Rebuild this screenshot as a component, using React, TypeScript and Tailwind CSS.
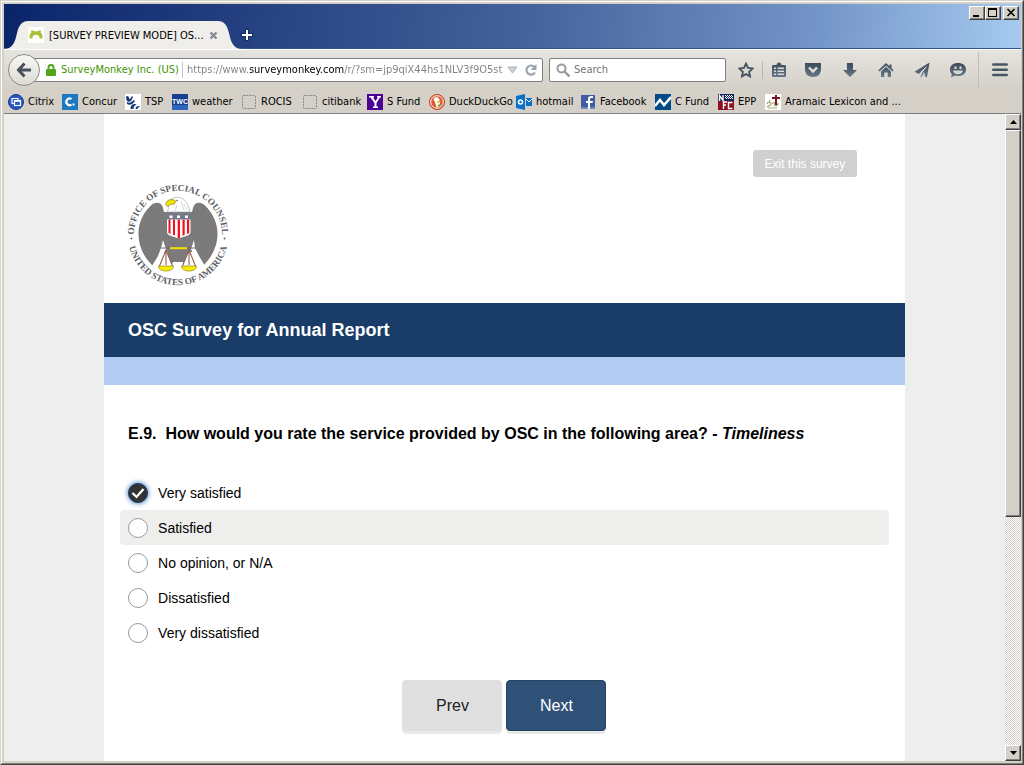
import { useState } from 'react';
import type { ReactNode } from 'react';

const ARC_TOP = 'M 9.100 67 A 44 44 0 1 1 90.900 67';
const ARC_BOTTOM = 'M 0.200 43 A 50.400 50.400 0 1 0 99.800 43';

const speckles = Array.from({ length: 110 }, (_, i) => ({
  x: (i * 37) % 41,
  y: (i * 23 + ((i * i) % 7)) % 37,
  fill: ['#94608f', '#6d6f9c', '#8f7f86', '#7d5f92'][i % 4],
}));

function Seal() {
  return (
    <svg viewBox="-2 -1 104 104" className="-ml-0.5 size-[104px]" role="img" aria-label="Office of Special Counsel seal">
      <defs>
        <path id="arc-top" d={ARC_TOP} />
        <path id="arc-bottom" d={ARC_BOTTOM} />
        <pattern id="feathers" width="41" height="37" patternUnits="userSpaceOnUse">
          <rect width="41" height="37" fill="#7b7b7b" />
          {speckles.map((dot, i) => <rect key={i} x={dot.x} y={dot.y} width="1" height="1" fill={dot.fill} opacity="0.6" />)}
        </pattern>
      </defs>
      <path d="M35 24C34 18 27 17 22.500 22 14 30 10 41 10.500 51c.3 11 5 22 14 30.500L28 76l8-8h4v10l10 4 10-4V68h4l8 8 3.500 5.500C84 73 89.300 62 89.500 51c.3-11-4-21-12-29-5-5-11-4-12.500 2l-1 4H36Z" fill="url(#feathers)" />
      <path d="M45 78h10l3 8H42z" fill="#fff" />
      <path d="M39 28c1-2 2-4 1-7l1-4c4-5 13-5 16 0 3 3 4 7 5 11Z" fill="#fff" stroke="#93a0a4" strokeWidth=".6" />
      <path d="M53 17l3 9M49 21l-2 6M56 20l3 6" stroke="#b9c3c6" strokeWidth=".6" />
      <path d="M38.500 18c2-3 7-3 9-1l-1 3-4 .5-3 2c-2-1-2-3-1-4.500Z" fill="#f3e500" stroke="#766b1c" strokeWidth=".6" />
      <circle cx="49" cy="16.500" r=".8" fill="#555" />
      <path d="M39 30h23.500v18c0 4-6 4-11.700 6.500C45 52 39 52 39 48Z" fill="#fff" />
      <path d="M40.500 35.500h2V50l-2-1zM45 35.500h2v16l-2-.7zM49.700 35.500h2.300V54l-1.200.5-1.100-.5zM54.500 35.500h2.200V51l-2.200.8zM59 35.500h2.200V49l-2.200 1z" fill="#f60f1b" />
      <path d="M38 29.500h25v6H38z" fill="#767a88" />
      <path d="M41.500 31.500h3v2.500h-3zM49 31.500h3v2.500h-3zM57 31.500h3v2.500h-3z" fill="#fff" />
      <path d="M35 56l3 9-5 12-5 6-4-1 6-10 3-8zM66 56l-3 9 5 12 5 6 4-1-6-10-4-8z" fill="#fff" />
      <path d="M33 64h9M59 64h9" stroke="#6f6470" strokeWidth="1.200" />
      <path d="M42 64.200h17" stroke="#f3e000" strokeWidth="2" />
      <path d="M38 66l-6.500 16h13zM61 66l-6.500 16h13z" fill="#fff" />
      <path d="M38 66l-6.500 16M38 66l6.500 16M38 67v14M61 66l-6.500 16M61 66l6.500 16M61 67v14" stroke="#94624a" strokeWidth="1.100" />
      <path d="M30.500 82h15c0 3-3 5-7.500 5s-7.500-2-7.500-5ZM53.500 82h15c0 3-3 5-7.500 5s-7.500-2-7.500-5Z" fill="#f5ec00" stroke="#9b8528" strokeWidth=".7" />
      <g fill="#5d6064" fontFamily='"Liberation Serif", serif' fontSize="9.200" fontWeight="700">
        <text textAnchor="middle"><textPath href="#arc-top" startOffset="50%">OFFICE OF SPECIAL COUNSEL</textPath></text>
        <text textAnchor="middle"><textPath href="#arc-bottom" startOffset="50%">UNITED STATES OF AMERICA</textPath></text>
      </g>
      <circle cx="3.500" cy="54.500" r="0.900" fill="#5d6064" />
      <circle cx="96.500" cy="54.500" r="0.900" fill="#5d6064" />
    </svg>
  );
}

function Glyph({ children, label, box = 'w-[36px]' }: { children: ReactNode; label: string; box?: string }) {
  return (
    <button type="button" aria-label={label} className={`flex h-6 shrink-0 items-center justify-center ${box}`}>
      <svg viewBox="0 0 16 16" className="size-4" fill="url(#steel)">{children}</svg>
    </button>
  );
}

const bookmarks: { name: string; width: string; icon: ReactNode }[] = [
  { name: 'Citrix', width: 'w-[54px]', icon: <><circle cx="8" cy="8" r="7.500" fill="#2c56c4" stroke="#173a8f" /><path d="M4 4.500h6v5H4z" fill="none" stroke="#fff" strokeWidth="1.200" /><path d="M6.500 6.500h6v5h-6z" fill="#2c56c4" stroke="#fff" strokeWidth="1.200" /><path d="M6 6h7v1.800H6z" fill="#fff" /></> },
  { name: 'Concur', width: 'w-[63px]', icon: <><path d="M0 0h16v16H0z" fill="#1c78c0" /><path d="M9.500 5.200A3.300 3.300 0 1 0 9.500 10.600" fill="none" stroke="#fff" strokeWidth="2.200" /><path d="M10.500 9.500h2v2h-2z" fill="#fff" /></> },
  { name: 'TSP', width: 'w-[47px]', icon: <><path d="M0 0h16v16H0z" fill="#fff" /><path d="M1 3c1-2 3-1 3 1 0 1 2 1 2 3-3 2-5 0-5-4M5 5l2-3 1 1-2 4M2 8c4 2 5-1 7-2l1 1c-2 3-5 5-8 3M5.500 15c0-4 2-5 5-5l1 1c-2 0-3 2-3 4zM10.500 15c0-2 1-3 4-3v1c-1 0-2 1-2 2z" fill="#18377f" /></> },
  { name: 'weather', width: 'w-[69px]', icon: <><path d="M0 0h16v16H0z" fill="#163f91" /><path d="M0 11h16v5H0z" fill="#2b67bd" /><text x="8" y="10" textAnchor="middle" fontFamily="Liberation Sans, sans-serif" fontWeight="700" fontSize="7" fill="#fff">TWC</text></> },
  { name: 'ROCIS', width: 'w-[61px]', icon: <rect x="1.500" y="1.500" width="13" height="13" rx="1" fill="none" stroke="#858585" strokeDasharray="2 1" /> },
  { name: 'citibank', width: 'w-[65px]', icon: <rect x="1.500" y="1.500" width="13" height="13" rx="1" fill="none" stroke="#858585" strokeDasharray="2 1" /> },
  { name: 'S Fund', width: 'w-[62px]', icon: <><path d="M0 0h16v16H0z" fill="#4b0098" /><path d="M2 2h5v1.500H6L8.500 7 11 3.500h-1V2h4v1.500h-1L9.500 9v3.500H11V14H6v-1.500h1.500V9L3.500 3.500H2z" fill="#fff" /></> },
  { name: 'DuckDuckGo', width: 'w-[87px]', icon: <><circle cx="8" cy="8" r="7.500" fill="#de5833" stroke="#c83d18" /><circle cx="8" cy="8" r="6.300" fill="none" stroke="#fff" /><path d="M5 4c3-2 6 0 5.500 3l1 5-4 1.500L6 8C5 7 4 5 5 4Z" fill="#fff" /><path d="M7.500 7.500l4-1v1.500l-3 1z" fill="#f4b900" /><path d="M8.500 11l3-1v2.500H9z" fill="#66a83a" /></> },
  { name: 'hotmail', width: 'w-[64px]', icon: <><path d="M0 2l9-2v16l-9-2z" fill="#0872c6" /><circle cx="4.500" cy="8" r="2" fill="none" stroke="#fff" strokeWidth="1.500" /><path d="M10 4h6v8h-6z" fill="#0872c6" /><path d="M10 5l3 3 3-3" fill="none" stroke="#fff" /></> },
  { name: 'Facebook', width: 'w-[75px]', icon: <><path d="M1 1h14v14H1z" fill="#405da6" /><path d="M1 13h14v2H1z" fill="#7288c0" /><path d="M8 15V9H6V7h2V5c0-2 1-3 3-3h2v2h-1.500C10.500 4 10 4.500 10 5.500V7h3l-.5 2H10v6z" fill="#fff" /></> },
  { name: 'C Fund', width: 'w-[63px]', icon: <><path d="M0 0h16v16H0z" fill="#004b86" /><path d="M0 12l5-6 4 5 7-8" fill="none" stroke="#fff" strokeWidth="2.500" /></> },
  { name: 'EPP', width: 'w-[47px]', icon: <><path d="M0 0h16v16H0z" fill="#10205f" /><path d="M0 7h16v9H0z" fill="#8d1020" /><path d="M7 1h1v1H7zm2 0h1v1H9zm2 0h1v1h-1zm2 0h1v1h-1zM8 2h1v1H8zm2 0h1v1h-1zm2 0h1v1h-1zm2 0h1v1h-1zM7 3h1v1H7zm2 0h1v1H9zm2 0h1v1h-1zm2 0h1v1h-1zM8 4h1v1H8zm2 0h1v1h-1zm2 0h1v1h-1zm2 0h1v1h-1z" fill="#fff" /><path d="M1.500 7V1.500L5 6.500V1M5.500 15V8H9M5.500 11H8M14.500 8.500h-4v6h4" fill="none" stroke="#fff" strokeWidth="1.400" /></> },
  { name: 'Aramaic Lexicon and ...', width: 'w-[140px]', icon: <><path d="M0 0h16v16H0z" fill="#fff" /><path d="M2 10c1-3 4-2 4 0s-3 2-4 3M7 10c2-3 4 0 2 2M10 12c2 0 3-1 3-3M3 14h9M5 6l-1 3" fill="none" stroke="#a7ac76" strokeWidth="1.200" /><path d="M10 1h2v2h3v2h-3v6h-2V5H7V3h3z" fill="#7b1220" /></> },
];

const bevel = 'border border-t-white border-l-white border-r-[#404040] border-b-[#404040] bg-[#d4d0c8] shadow-[inset_-1px_-1px_0_#808080]';

function TitleBar() {
  return (
    <header className="flex h-[45px] shrink-0 justify-between border-b border-[#31568d] bg-[linear-gradient(96deg,#0a246a,#426099_50%,#7495c8_80%,#a6caf0)]">
      <div className="flex items-end">
        <svg viewBox="0 0 24 28" className="-mb-px h-7 w-6"><path d="M0 28C8 28 11 22 13 12 15 4 18 0 24 0V28Z" fill="#efeeea" /></svg>
        <div className="-mb-px flex h-7 w-[190px] items-center bg-[#efeeea]">
          <svg viewBox="0 0 16 16" className="size-4 shrink-0">
            <path d="M0 0h16v16H0z" fill="#fff" />
            <path d="M1.500 11.500C1 8 2 6.500 3.500 5.500L2.800 4c1.500-1 3-.5 3.400.5 1.200-.4 2.400-.4 3.600 0 .4-1 1.900-1.500 3.400-.5l-.7 1.500c1.500 1 2.500 2.500 2 6h-2.800c0-2.500-1.200-3.800-3.700-3.800s-3.700 1.300-3.700 3.800Z" fill="#a9bf38" />
          </svg>
          <span className="ml-[5px] w-[160px] shrink-0 pt-0.5 whitespace-nowrap">[SURVEY PREVIEW MODE] OS...</span>
          <button type="button" aria-label="Close tab" className="shrink-0">
            <svg viewBox="0 0 9 9" className="size-[9px]"><path d="M1.500 1.500l6 6M7.500 1.500l-6 6" stroke="#858b92" strokeWidth="2.400" /></svg>
          </button>
        </div>
        <svg viewBox="0 0 24 28" className="-mb-px h-7 w-6"><path d="M24 28C16 28 13 22 11 12 9 4 6 0 0 0V28Z" fill="#efeeea" /></svg>
        <button type="button" aria-label="New tab" className="mb-1.5 -ml-0.5">
          <svg viewBox="0 0 14 14" className="size-[14px]"><path d="M7 1v12M1 7h12" stroke="#172d64" strokeWidth="4" /><path d="M7 2v10M2 7h10" stroke="#fff" strokeWidth="2" /></svg>
        </button>
      </div>
      <div className="flex pt-0.5 pr-0.5">
        <button type="button" aria-label="Minimize" className={`h-[14px] w-4 ${bevel}`}><svg viewBox="0 0 14 12" className="h-3 w-[14px]"><path d="M3 8h6v2H3z" /></svg></button>
        <button type="button" aria-label="Maximize" className={`h-[14px] w-4 ${bevel}`}><svg viewBox="0 0 14 12" className="h-3 w-[14px]"><path d="M2 1h9v9H2zM3 3v6h7V3z" fillRule="evenodd" /></svg></button>
        <button type="button" aria-label="Close" className={`ml-0.5 h-[14px] w-4 ${bevel}`}><svg viewBox="0 0 14 12" className="h-3 w-[14px]"><path d="M3.500 2l7 7M10.500 2l-7 7" stroke="#000" strokeWidth="1.600" /></svg></button>
      </div>
    </header>
  );
}

function NavBar() {
  return (
    <nav aria-label="Navigation" className="flex h-10 shrink-0 items-center border-t border-white bg-linear-to-b from-[#e6e4df] to-[#d4d0c8] pl-1">
      <svg className="absolute size-0" aria-hidden="true">
        <defs><linearGradient id="steel" x1="0" y1="0" x2="0" y2="1"><stop stopColor="#3c4a58" /><stop offset="1" stopColor="#66788a" /></linearGradient></defs>
      </svg>
      <button type="button" aria-label="Back" className="z-10 flex size-8 shrink-0 items-center justify-center rounded-full border border-[#8b8b88] bg-linear-to-b from-[#f8f8f6] to-[#dddad4]">
        <svg viewBox="0 0 16 16" className="size-4"><path d="M8.500 1.500L2.500 8l6 6.500M3 8h12" fill="none" stroke="#46515b" strokeWidth="3" /></svg>
      </button>
      <div className="-ml-2 flex h-6 min-w-0 flex-1 items-center rounded-xs border border-[#808080] bg-white pr-1 pl-[13px]">
        <svg viewBox="0 0 10 12" className="h-3 w-[10px] shrink-0"><path d="M2.500 6V3.500a2.500 2.500 0 0 1 5 0V6" fill="none" stroke="#51a51a" strokeWidth="1.800" /><rect y="5" width="10" height="7" rx="1" fill="#51a51a" /></svg>
        <span className="ml-[5px] w-[121px] shrink-0 whitespace-nowrap text-[#3f9500]">SurveyMonkey Inc. (US)</span>
        <span className="h-4 w-px shrink-0 bg-[#c6c6be]" />
        <input
          type="text"
          aria-label="Address"
          defaultValue="https://www.surveymonkey.com/r/?sm=jp9qiX44hs1NLV3f9O5sth"
          className="ml-1 h-5 min-w-0 flex-1 bg-[linear-gradient(90deg,#808080_63px,#000_63px,#000_157px,#808080_157px)] bg-clip-text text-transparent outline-none"
        />
        <svg viewBox="0 0 11 8" className="mr-[6px] ml-1 h-2 w-[11px] shrink-0"><path d="M1 1h9L5.500 7z" fill="#ced3d8" stroke="#a9b0b7" /></svg>
        <button type="button" aria-label="Reload" className="shrink-0">
          <svg viewBox="0 0 14 14" className="size-[14px]"><path d="M11 9.500A4.600 4.600 0 1 1 10.500 4" fill="none" stroke="#9ba5b0" strokeWidth="2.200" /><path d="M12.500 1v6h-6z" fill="#9ba5b0" /></svg>
        </button>
      </div>
      <label className="mr-1 ml-[6px] flex h-6 w-[177px] shrink-0 items-center rounded-xs border border-[#808080] bg-white pl-[6px]">
        <svg viewBox="0 0 14 14" className="size-[14px] shrink-0"><circle cx="5.500" cy="5.500" r="4" fill="none" stroke="#999" strokeWidth="2" /><path d="M8.500 8.500l5 5" stroke="#999" strokeWidth="2.400" /></svg>
        <input type="text" placeholder="Search" aria-label="Search" className="ml-1 h-5 min-w-0 flex-1 outline-none placeholder:text-[#757575]" />
      </label>
      <Glyph label="Bookmark" box="w-[32px]"><path d="M8 1.700l2 4.300 4.500.600-3.300 3.200.8 4.600L8 12.200l-4 2.200.8-4.600L1.500 6.600 6 6z" fill="none" stroke="#46545f" strokeWidth="1.900" /></Glyph>
      <span className="h-[18px] w-px shrink-0 bg-[#b8b5af]" />
      <Glyph label="Bookmarks list" box="w-[31px]"><path d="M1 4.500C1 3 2 3 3 3h2.500c.5-3.500 4.500-3.500 5 0H13c1 0 2 0 2 1.500V14c0 1-1 1-1 1H2c-1 0-1-1-1-1zM3 5.500V7h2V5.500zm3.500 0V7H13V5.500zM3 8.500V10h2V8.500zm3.500 0V10H13V8.500zM3 11.500V13h2v-1.500zm3.500 0V13H13v-1.500z" fillRule="evenodd" /></Glyph>
      <Glyph label="Pocket" box="w-[38px]"><path d="M0 1h16v6c0 5-3 8-8 8s-8-3-8-8z" /><path d="M4 5.500l4 4 4-4" fill="none" stroke="#e2e0db" strokeWidth="2.400" /></Glyph>
      <Glyph label="Downloads"><path d="M5 1h6v7h4l-7 7-7-7h4z" /></Glyph>
      <Glyph label="Home"><path d="M8 1L.3 8.200l1.200 1.200L8 3.500l6.500 5.900 1.200-1.200-2.200-2V2.500h-2v1.800zM3 9.500l5-4.700 5 4.700V15H9.700v-4.500H6.300V15H3z" /></Glyph>
      <Glyph label="Share"><path d="M15.500.5L.5 9.700 4.800 12 13 4 6.500 13v2.800l2-2.300 1.500-4 1 5 2 .8z" /><path d="M12.500 4.500L8 9.500l-1.500 5" fill="none" stroke="#e2e0db" strokeWidth=".9" /></Glyph>
      <Glyph label="Chat"><path d="M8 1c4.800 0 8 2.600 8 6.400S12.800 14 8 14c-1 0-2-.1-3-.5L1 15.500l.8-3.500C.6 11 0 9.500 0 7.500 0 3.600 3.200 1 8 1M4.500 4.500V7h2V4.500zm5 0V7h2V4.500zM3 8.500c.5 2.500 2.500 3.700 5 3.700s4.500-1.200 5-3.700z" fillRule="evenodd" /></Glyph>
      <span className="ml-0.5 h-9 w-px shrink-0 bg-[#c2bfb9]" />
      <Glyph label="Menu" box="w-[42px]"><path d="M1.300 2.500h13.400M1.300 7.700h13.400M1.300 13h13.400" stroke="#46545f" strokeWidth="2.600" strokeLinecap="round" /></Glyph>
    </nav>
  );
}

function BookmarksBar() {
  return (
    <nav aria-label="Bookmarks" className="flex h-[25px] shrink-0 items-center overflow-hidden border-b border-[#808080] bg-[#d4d0c8] pt-0.5 pl-1">
      {bookmarks.map((item) => (
        <a key={item.name} href="#" className={`flex shrink-0 items-center gap-1 whitespace-nowrap ${item.width}`}>
          <svg viewBox="0 0 16 16" className="size-4 shrink-0">{item.icon}</svg>
          {item.name}
        </a>
      ))}
    </nav>
  );
}

function Scrollbar() {
  return (
    <div className="flex w-4 shrink-0 flex-col bg-[repeating-conic-gradient(#d4d0c8_0_25%,#fff_0_50%)] bg-size-[2px_2px]">
      <button type="button" aria-label="Scroll up" className={`flex h-4 shrink-0 items-center justify-center ${bevel}`}><svg viewBox="0 0 7 4" className="h-1 w-[7px]"><path d="M0 4L3.500 0 7 4z" /></svg></button>
      <div className="min-h-0 flex-1"><div className={`h-[63%] ${bevel}`} /></div>
      <button type="button" aria-label="Scroll down" className={`flex h-4 shrink-0 items-center justify-center ${bevel}`}><svg viewBox="0 0 7 4" className="h-1 w-[7px]"><path d="M0 0h7L3.500 4z" /></svg></button>
    </div>
  );
}

const answers = ['Very satisfied', 'Satisfied', 'No opinion, or N/A', 'Dissatisfied', 'Very dissatisfied'];

function Survey() {
  const [choice, setChoice] = useState(answers[0]);
  return (
    <main className="mx-auto min-h-full w-4/5 bg-white font-['Liberation_Sans',Arial,sans-serif] text-black">
      <div className="flex items-start justify-between pt-9 pr-12 pb-4 pl-6">
        <div className="pt-[33px]"><Seal /></div>
        <button type="button" className="h-[27px] w-[104px] rounded-[3px] bg-[#d0d0d0] text-[12px] text-white">Exit this survey</button>
      </div>
      <h1 className="bg-[#193d68] px-6 text-[18px] leading-[54px] font-bold text-white">OSC Survey for Annual Report</h1>
      <div className="h-7 bg-[#b3ccf1]" />
      <form className="px-4 pt-9" onSubmit={(event) => event.preventDefault()}>
        <fieldset>
          <legend className="px-2 text-[16px] leading-[26px] font-bold whitespace-pre-wrap">E.9.  How would you rate the service provided by OSC in the following area? - <em>Timeliness</em></legend>
          <div className="pt-7">
            {answers.map((answer) => (
              <label key={answer} className={`flex h-[35px] items-center rounded-sm px-2 text-[14px] ${answer === 'Satisfied' ? 'bg-[#eeeeec]' : ''}`}>
                <span className="mr-[10px] grid size-5 place-items-center">
                  <input
                    type="radio"
                    name="rating"
                    value={answer}
                    checked={choice === answer}
                    onChange={() => setChoice(answer)}
                    className="col-start-1 row-start-1 size-5 appearance-none rounded-full border border-[#999] bg-white checked:border-[#173b68] checked:bg-[#333] checked:shadow-[0_0_4px_1px_#6f9bd0]"
                  />
                  {choice === answer && <svg viewBox="0 0 14 12" className="pointer-events-none col-start-1 row-start-1 h-3 w-[14px]"><path d="M1.500 6l4 4 7-8" fill="none" stroke="#fff" strokeWidth="2.200" /></svg>}
                </span>
                {answer}
              </label>
            ))}
          </div>
        </fieldset>
        <div className="flex justify-center gap-1 pt-[30px] pb-7 text-[16px]">
          <button type="button" className="h-[51px] w-[100px] rounded-sm bg-[#e0e0e0] text-[#222] shadow-[0_3px_0_#e9e9e9]">Prev</button>
          <button type="submit" className="h-[51px] w-[100px] rounded-sm border border-[#244463] bg-[#2f5178] text-white shadow-[0_3px_0_#e9e9e9]">Next</button>
        </div>
      </form>
    </main>
  );
}

export default function App() {
  return (
    <div className="h-screen border-t border-l border-r border-b border-t-[#d4d0c8] border-r-[#404040] border-b-[#404040] border-l-[#d4d0c8] font-['DejaVu_Sans_Condensed','DejaVu_Sans',sans-serif] text-[11px] leading-4 text-black">
      <div className="h-full border border-t-white border-r-[#808080] border-b-[#808080] border-l-white">
        <div className="flex h-full flex-col border-2 border-r-1 border-[#d4d0c8]">
          <TitleBar />
          <NavBar />
          <BookmarksBar />
          <div className="flex min-h-0 flex-1">
            <div className="min-w-0 flex-1 overflow-hidden bg-[#eee]"><Survey /></div>
            <Scrollbar />
          </div>
        </div>
      </div>
    </div>
  );
}
